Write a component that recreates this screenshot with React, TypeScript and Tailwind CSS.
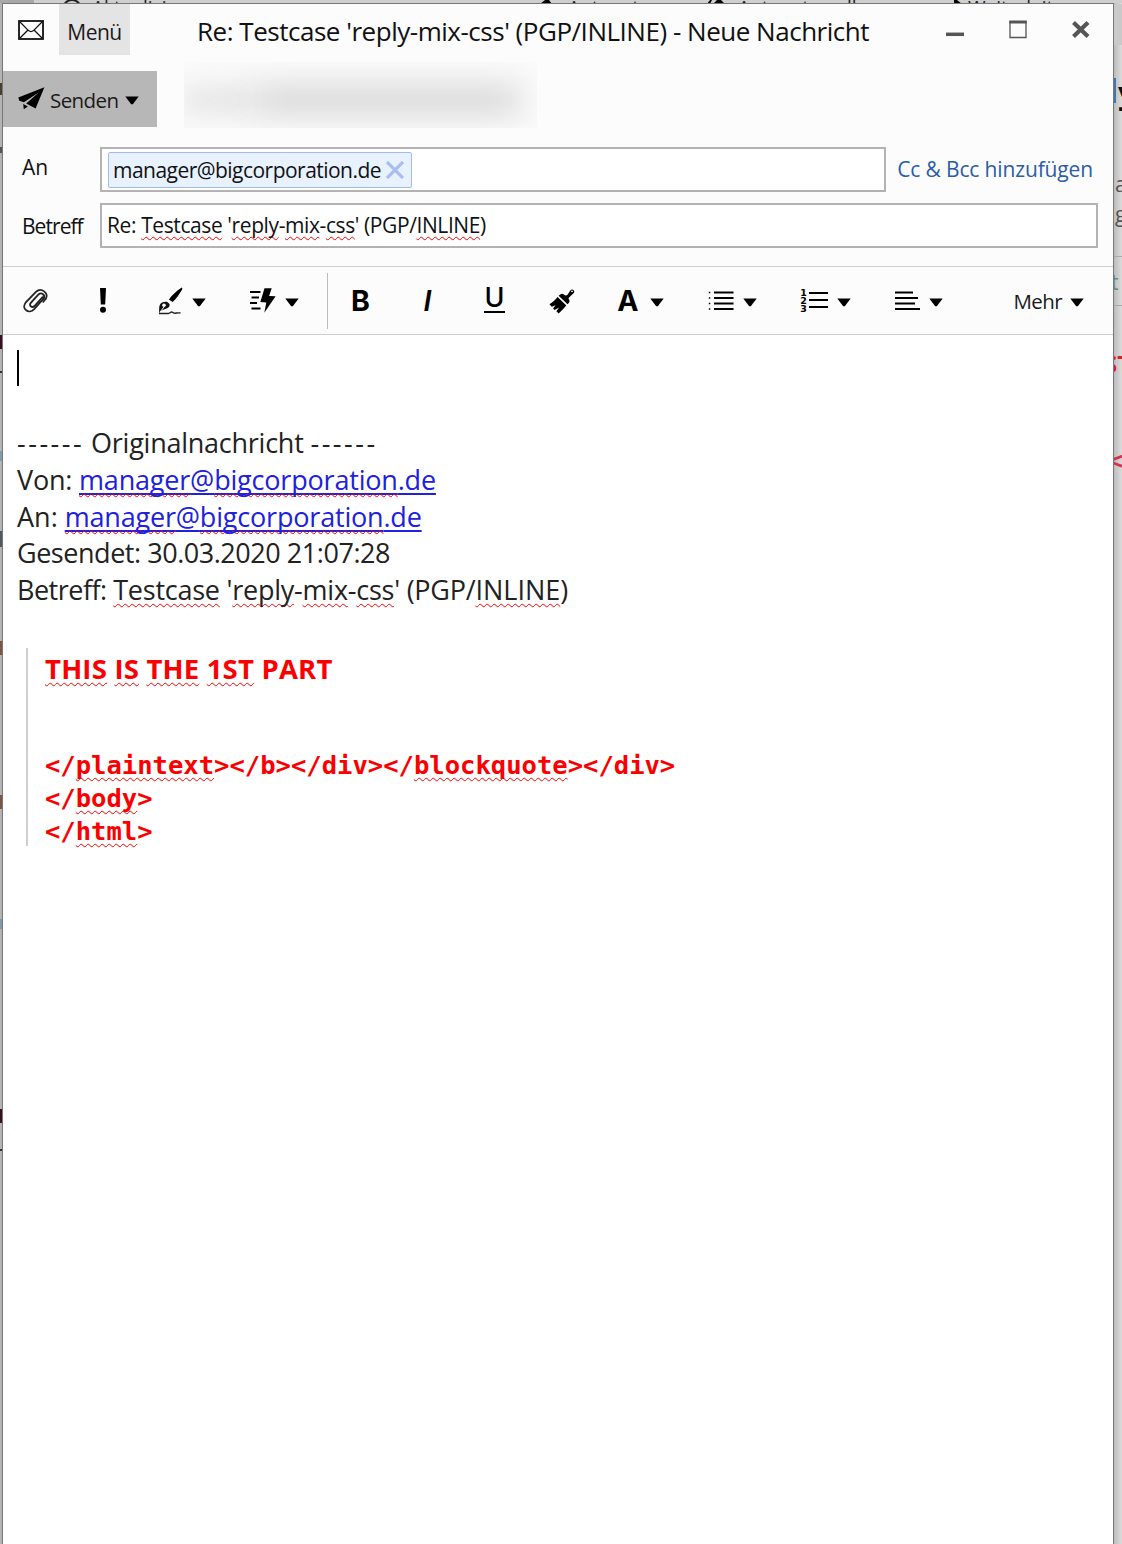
import type { ReactNode } from "react";

function Caret() {
  return (
    <svg width="14" height="9" viewBox="0 0 14 9" className="mt-[3px] shrink-0">
      <path d="M0.3 0.5h13.4L7.8 8.3h-1.6z" fill="#000" />
    </svg>
  );
}

function Typo({ children }: { children: ReactNode }) {
  return (
    <span className="underline decoration-[#ff0000] decoration-wavy decoration-[1px] underline-offset-[3px] [text-decoration-skip-ink:none]">
      {children}
    </span>
  );
}

function EnvelopeIcon() {
  return (
    <svg width="26" height="20" viewBox="0 0 26 20" fill="none" stroke="#111">
      <rect x="1" y="1" width="24" height="18" strokeWidth="1.8" />
      <path d="M2 2l8.5 8.6q2.5 2 5 0L24 2M2 18l8-8M24 18l-8-8" strokeWidth="1.3" />
    </svg>
  );
}

function PlaneIcon() {
  return (
    <svg width="27" height="24" viewBox="0 0 27 24" fill="#000">
      <path d="M26.4 0.3L0.3 10.6l1 3.1 4.6 1.5L21 5.2 8.2 16.6l9.4 5z" />
      <path d="M5.2 17l4.6 2.6-4 2.6z" />
    </svg>
  );
}

function PaperclipIcon() {
  return (
    <svg width="25" height="26" viewBox="0 0 25 26" fill="none" stroke="#222" strokeWidth="1.8" strokeLinecap="round">
      <path d="M19.5 9.200L11.500 18c-2.600 2.400-5.800-.4-3.700-3.200l7.700-8.300c3.200-2.800 7.300.6 5 4.200" />
      <path d="M20.500 10.700l-9.300 10.400C5.800 26.800-2 20.800 2.600 14.700L13.200 3.600C18.200-.9 26.300 5 22.600 11" />
      <path d="M22.600 11l-2.400 2.800" />
    </svg>
  );
}

function PenIcon() {
  return (
    <svg width="25" height="28" viewBox="0 0 25 28">
      <path d="M23.800.5c.8.800.5 1.700 0 2.600-2.500 4.600-5.600 8.700-9.300 12l-3.600-2.700C14.300 8 18.800 3.500 23.800.5z" fill="#000" />
      <path d="M9 14.800l2.600 2.200c.3 2-.7 3.600-2.900 4.500-3 .8-5.200 2-7.700 4.400.4-3.300-.4-6.600 1.300-9 1.600-1.800 4.100-2.600 6.700-2.100z" fill="#111" />
      <circle cx="6" cy="18.300" r="1.800" fill="#fcfcfc" />
      <path d="M2 25l4-5" stroke="#fcfcfc" strokeWidth="1" />
      <path d="M1 26.500h9c1.800 0 2.400-1.800 4.200-1.400 1 .3 1.500 1.200 3 1.100 1.500-.1 3-.6 5.300-.2" fill="none" stroke="#222" strokeWidth="1.400" />
    </svg>
  );
}

function QuickTextIcon() {
  return (
    <svg width="26" height="25" viewBox="0 0 26 25">
      <path d="M0 4h10.500M1.500 9.500h7.500M0 15h7M1.500 20.500h9" stroke="#000" strokeWidth="1.900" />
      <path d="M14.500.3h7.200l-2.600 7.600 6.500.3L14.300 24.700l2-10.200-6-.6z" fill="#000" />
    </svg>
  );
}

function BrushIcon() {
  return (
    <svg width="26" height="26" viewBox="0 0 26 26">
      <path d="M18.500 6.800l3-4.600c1.200-1.700 4.300-.4 3.700 2-.2.700-.6 1-1.200 1.500l-4.200 4c-.5.500-.4 1 .1 1.600 1 1.300.9 2.700-.4 4l-1 1L9.700 7.800l1.500-1.400c1.200-1 2.500-1 3.700.2.900.9 2.700 1.300 3.600.2z" fill="#000" />
      <circle cx="23" cy="3.300" r=".9" fill="#fcfcfc" />
      <path d="M8.600 8.900l8.700 8.500c-2 2.300-4.300 5-7.700 8l-2.200-2.200 2.700-3.800-4.500 2.700-1.500-1.500 2.400-3.400-3.700 1.600L.4 16.200C3.600 14.500 6.300 11.800 8.600 8.900z" fill="#000" />
    </svg>
  );
}

function BulletListIcon() {
  return (
    <svg width="26" height="20" viewBox="0 0 26 20" stroke="#000">
      <path d="M6 1.500h19.500M6 7h19.500M6 12.500h19.500M6 18h19.500" strokeWidth="1.900" />
      <path d="M.800 1.500h1.500M.800 7h1.500M.800 12.500h1.500M.800 18h1.500" strokeWidth="1.500" />
    </svg>
  );
}

function NumberedListIcon() {
  return (
    <span className="flex items-center gap-[2px]">
      <span className="flex w-[6px] flex-col items-center font-['DejaVu_Sans'] text-[9.500px] font-bold leading-[8px] text-black">
        <span>1</span>
        <span>2</span>
        <span>3</span>
      </span>
      <svg width="19" height="20" viewBox="0 0 19 20" stroke="#000">
        <path d="M0 2h19M0 9h19M0 16h19" strokeWidth="1.900" />
      </svg>
    </span>
  );
}

function AlignIcon() {
  return (
    <svg width="25" height="20" viewBox="0 0 25 20" stroke="#000">
      <path d="M0 1.500h18M0 7h23M0 12.500h20M0 18h25" strokeWidth="1.900" />
    </svg>
  );
}

function Tool({ children, wide }: { children: ReactNode; wide?: boolean }) {
  return (
    <button
      className={
        wide
          ? "flex h-full w-[93px] items-center justify-center gap-[9px] pr-[4px]"
          : "flex h-full w-[67px] items-center justify-center pr-[2px]"
      }
    >
      {children}
    </button>
  );
}

function TitleBar() {
  return (
    <header className="flex h-[57px] shrink-0 items-start">
      <div className="flex w-[56px] pl-[15px] pt-[16px]">
        <EnvelopeIcon />
      </div>
      <button className="flex h-[51px] w-[71px] items-center justify-center bg-[#e4e4e4] pt-[6px] text-[21px] tracking-[-0.5px] text-[#1a1a1a]">
        Menü
      </button>
      <h1 className="ml-[67px] pt-[9px] text-[26px] leading-[36px] tracking-[-0.48px] text-[#111]">
        Re: Testcase 'reply-mix-css' (PGP/INLINE) - Neue Nachricht
      </h1>
      <div className="ml-auto flex items-center pr-[22px] pt-[16px]">
        <svg width="146" height="20" viewBox="0 0 146 20" fill="none" stroke="#555">
          <path d="M1 14.300h18" strokeWidth="3.500" />
          <path d="M65 1v16.500h16V1" strokeWidth="1.300" />
          <path d="M64.300 2h17.400" strokeWidth="3" />
          <path d="M128.500 2.500l14.500 14M143 2.500l-14.500 14" strokeWidth="4.200" />
        </svg>
      </div>
    </header>
  );
}

function SendRow() {
  return (
    <div className="flex h-[67px] shrink-0 items-end">
      <button className="mb-px flex h-[56px] w-[154px] items-center bg-[#b7b7b7] pl-[15px] text-[20.500px] tracking-[-0.600px] text-[#1a1a1a]">
        <PlaneIcon />
        <span className="ml-[5px] pt-[3px]">Senden</span>
        <span className="ml-[7px]">
          <Caret />
        </span>
      </button>
      <div className="ml-[27px] flex h-[66px] w-[353px] items-center overflow-hidden bg-[#fafafa] pt-[9px]">
        <div className="h-[28px] w-[70px] shrink-0 bg-[#e6e6e6] blur-[12px]" />
        <div className="h-[28px] w-[265px] shrink-0 bg-[#d6d6d6] blur-[15px]" />
      </div>
    </div>
  );
}

function Fields() {
  return (
    <div className="flex shrink-0 flex-col gap-[11px] pt-[19px] pb-[18px] text-[21px] text-[#111]">
      <div className="flex h-[45px] items-center pr-[20px]">
        <label className="w-[97px] pb-[4px] pl-[19px]">An</label>
        <div className="flex h-full w-[786px] items-center border-2 border-[#b3b3b3] bg-white pl-[6px]">
          <span className="flex h-[36px] w-[304px] items-center rounded-[2px] border-[1.500px] border-[#9dbdec] bg-[#e8f2fe] pl-[4px]">
            <span className="pt-[2px] tracking-[-0.530px]">manager@bigcorporation.de</span>
            <svg width="18" height="18" viewBox="0 0 18 18" className="ml-auto mr-[7px] shrink-0" stroke="#a9bdf0" strokeWidth="3.200">
              <path d="M1 1l16 16M17 1L1 17" />
            </svg>
          </span>
        </div>
        <a className="ml-auto tracking-[-0.140px] text-[#2a5caa]">Cc & Bcc hinzufügen</a>
      </div>
      <div className="flex h-[45px] items-center">
        <label className="w-[97px] pl-[19px] pt-[2px] tracking-[-0.950px]">Betreff</label>
        <div className="flex h-full w-[998px] items-center border-2 border-[#b3b3b3] bg-white pl-[5px]">
          <span className="tracking-[-0.400px]">
            Re: <Typo>Testcase</Typo> '<Typo>reply</Typo>-<Typo>mix</Typo>-<Typo>css</Typo>' (PGP/<Typo>INLINE</Typo>)
          </span>
        </div>
      </div>
    </div>
  );
}

function Toolbar() {
  return (
    <div className="flex h-[69px] shrink-0 items-center border-y-[1.500px] border-[#cfcfcf] text-black">
      <Tool><PaperclipIcon /></Tool>
      <Tool>
        <svg width="8" height="25" viewBox="0 0 8 25">
          <path d="M1 0h6l-.8 16.500H1.800z" />
          <circle cx="4" cy="21.700" r="3" />
        </svg>
      </Tool>
      <Tool wide><PenIcon /><Caret /></Tool>
      <Tool wide><QuickTextIcon /><Caret /></Tool>
      <div className="ml-[4px] h-[56px] w-px bg-[#bdbdbd]" />
      <div className="flex h-full items-center font-['Inter'] text-[28.500px] font-bold">
        <Tool><span className="pt-[2px]">B</span></Tool>
        <Tool><i className="pt-[2px] font-semibold">I</i></Tool>
        <Tool>
          <span className="flex h-[24px] w-[21px] items-center justify-center border-b-2 border-black pb-[2px] text-[27px] font-medium">U</span>
        </Tool>
        <Tool><BrushIcon /></Tool>
        <Tool wide><span className="pt-[2px]">A</span><span className="ml-[2px]"><Caret /></span></Tool>
      </div>
      <div className="-ml-px flex h-full">
        <Tool wide><BulletListIcon /><Caret /></Tool>
        <Tool wide><NumberedListIcon /><Caret /></Tool>
        <Tool wide><AlignIcon /><Caret /></Tool>
      </div>
      <button className="ml-auto mr-[29px] flex items-center gap-[8px] text-[20.500px] tracking-[-0.600px] text-[#1a1a1a]">
        <span className="pt-[2px]">Mehr</span><Caret />
      </button>
    </div>
  );
}

function Address() {
  return (
    <a className="tracking-[-0.190px] text-[#2020e0] underline decoration-[2px] underline-offset-[3px]">
      <Typo>manager</Typo>@<Typo>bigcorporation</Typo>.de
    </a>
  );
}

function Editor() {
  return (
    <main className="flex-1 bg-white pl-[14px] pt-[15px] text-[27px] leading-[36.800px] text-[#222]">
      <div className="h-[36px] w-[2px] bg-black" />
      <div className="pt-[39px]">
        <p className="tracking-[-0.100px]">
          <span className="tracking-[2.500px]">------</span> <span className="tracking-[-0.250px]">Originalnachricht</span>{" "}
          <span className="tracking-[2.500px]">------</span>
        </p>
        <p><span className="tracking-[-0.200px]">Von: </span><Address /></p>
        <p>An: <Address /></p>
        <p className="tracking-[-0.460px]">Gesendet: 30.03.2020 21:07:28</p>
        <p className="tracking-[-0.240px]">
          <span className="tracking-[-0.500px]">Betreff: </span>
          <Typo>Testcase</Typo> '<Typo>reply</Typo>-<Typo>mix</Typo>-<Typo>css</Typo>' (PGP/<span className="tracking-[0px]"><Typo>INLINE</Typo></span>)
        </p>
      </div>
      <blockquote className="ml-[9px] mt-[39px] h-[198px] border-l-2 border-[#cfcfcf] pl-[17px] pt-[3px] font-bold text-[#fa0000]">
        <p className="text-[27.500px] tracking-[0.200px]">
          <Typo>THIS</Typo> <Typo>IS</Typo> <Typo>THE</Typo> <Typo>1ST</Typo> PART
        </p>
        <pre className="mt-[61px] font-['DejaVu_Sans_Mono'] text-[25.540px] leading-[33px]">
          &lt;/<Typo>plaintext</Typo>&gt;&lt;/b&gt;&lt;/div&gt;&lt;/<Typo>blockquote</Typo>&gt;&lt;/div&gt;{"\n"}
          &lt;/<Typo>body</Typo>&gt;{"\n"}
          &lt;/<Typo>html</Typo>&gt;
        </pre>
      </blockquote>
    </main>
  );
}

/* The mail list window, of which only thin edges show behind the composer. */
function TopEdge() {
  return (
    <div className="flex h-[3px] shrink-0 overflow-hidden whitespace-nowrap bg-[#cfcfcf] text-[19px] leading-[14px] text-[#222]">
      <div className="w-[34px] shrink-0 bg-[#a8a8a8]" />
      <svg width="20" height="14" viewBox="0 0 20 14" className="ml-[28px] mr-[10px] shrink-0" fill="none" stroke="#222" strokeWidth="2">
        <circle cx="10" cy="9" r="9" />
      </svg>
      <span className="w-[448px] shrink-0">Aktualisieren</span>
      <svg width="12" height="4" viewBox="0 0 12 4" className="mr-[16px] shrink-0">
        <path d="M0 4l5-4h4l3 4z" />
      </svg>
      <span className="w-[139px] shrink-0">Antworten</span>
      <svg width="18" height="4" viewBox="0 0 18 4" className="mr-[13px] shrink-0">
        <path d="M0 4l3-4h2L3 4zM6 4l4-4h4l4 4z" />
      </svg>
      <span className="w-[216px] shrink-0">Antworten alle</span>
      <svg width="8" height="4" viewBox="0 0 8 4" className="mr-[6px] shrink-0">
        <path d="M0 0h3l5 4H0z" />
      </svg>
      <span className="shrink-0">Weiterleiten</span>
    </div>
  );
}

const leftMarks = [
  { gap: "h-[80px]", mark: "h-[12px] bg-[#4a4030]" },
  { gap: "h-[52px]", mark: "h-[6px] bg-[#555]" },
  { gap: "h-[182px]", mark: "h-[14px] bg-[#3a1020]" },
  { gap: "h-[22px]", mark: "h-[2px] bg-[#333]" },
  { gap: "h-[78px]", mark: "h-[10px] bg-[#7f9dad]" },
  { gap: "h-[70px]", mark: "h-[16px] bg-[#4c5a63]" },
  { gap: "h-[94px]", mark: "h-[14px] bg-[#7c5544]" },
  { gap: "h-[140px]", mark: "h-[14px] bg-[#7c5544]" },
  { gap: "h-[110px]", mark: "h-[10px] bg-[#8199a8]" },
  { gap: "h-[180px]", mark: "h-[14px] bg-[#3a1020]" },
  { gap: "h-[26px]", mark: "h-[2px] bg-[#333]" },
];

function LeftEdge() {
  return (
    <div className="w-[2px] shrink-0 overflow-hidden bg-[#b4b4b4]">
      {leftMarks.map((m, i) => (
        <div key={i}>
          <div className={m.gap} />
          <div className={m.mark} />
        </div>
      ))}
    </div>
  );
}

function RightEdge() {
  return (
    <div className="flex w-[8px] shrink-0 flex-col overflow-hidden bg-linear-to-r from-[#bcbcbc] to-[#dcdcdc] pt-px">
      <div className="h-[41px] shrink-0 bg-[#c9c9c9]" />
      <div className="mt-[33px] flex h-[40px] shrink-0 text-[30px] font-bold leading-[30px] text-[#111]">
        <div className="mr-[2px] h-[25px] w-[2px] shrink-0 bg-[#3b76b5]" />
        y
      </div>
      <div className="mt-[51px] h-[30px] shrink-0 pl-px text-[21px] leading-[30px] text-[#555]">a</div>
      <div className="h-[58px] shrink-0 border-b border-[#aaa] pl-px text-[21px] leading-[30px] text-[#555] underline">g</div>
      <div className="-indent-[3px] h-[49px] shrink-0 border-b border-[#aaa] text-[21px] leading-[50px] text-[#5f8a85]">t</div>
      <div className="-indent-[10px] mt-[38px] h-[40px] shrink-0 whitespace-nowrap text-[24px] font-bold leading-[40px] text-[#d8202c]">ST</div>
      <div className="-indent-[6px] mt-[57px] h-[40px] shrink-0 font-['DejaVu_Sans_Mono'] text-[25px] font-bold leading-[40px] text-[#d8304a]">&lt;</div>
    </div>
  );
}

export default function App() {
  return (
    <div className="flex h-[1544px] w-[1122px] flex-col overflow-hidden font-['Open_Sans',sans-serif]">
      <TopEdge />
      <div className="flex min-h-0 flex-1">
        <LeftEdge />
        <section className="flex w-[1112px] shrink-0 flex-col border border-b-0 border-[#777] bg-[#fcfcfc]">
          <TitleBar />
          <SendRow />
          <Fields />
          <Toolbar />
          <Editor />
        </section>
        <RightEdge />
      </div>
    </div>
  );
}
